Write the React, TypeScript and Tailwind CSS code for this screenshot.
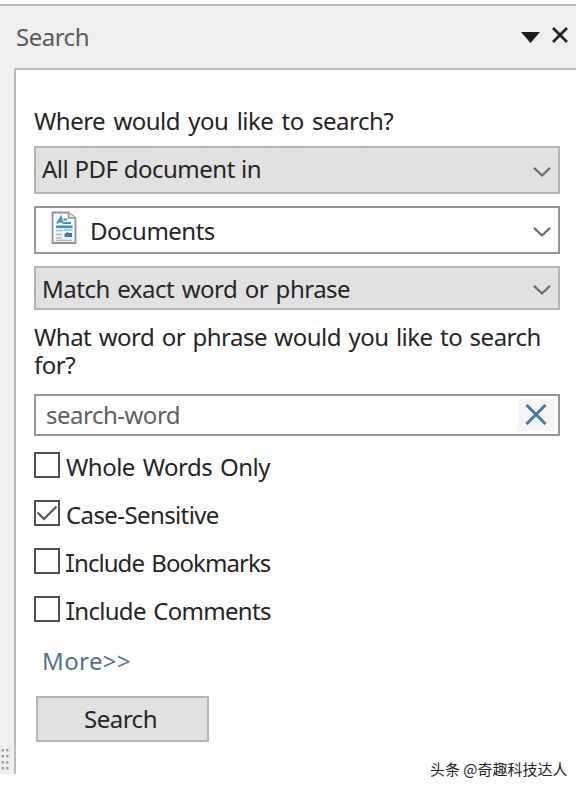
import React from "react";

function Chevron() {
  return (
    <svg width="18" height="12" viewBox="0 0 18 12" fill="none" stroke="#707070" strokeWidth="2.3" className="mt-1 mr-[7px] shrink-0">
      <path d="M1 1.8 L9 9.500 L17 1.8" />
    </svg>
  );
}

function DocumentIcon() {
  return (
    <svg width="26" height="34" viewBox="0 0 26 34" fill="none" className="-mt-1">
      <path d="M1.500 1.500H17.500L24.500 7V32H1.500Z" fill="#f4f7f8" stroke="#949494" strokeWidth="1.8" />
      <path d="M17.500 1.500V7H24.500" fill="#e3e3e3" stroke="#999" strokeWidth="1.500" />
      <path d="M6 12.500L10 6L11.500 12M7 10.500H11M12.500 8.500H16M12 12H20" stroke="#4c93b2" strokeWidth="1.8" />
      <path d="M5 15.800H21.500" stroke="#3d93bb" strokeWidth="2.600" />
      <path d="M5 19.500H12M13 19H21" stroke="#8fc1d4" strokeWidth="1.500" />
      <path d="M5 23.500H11M5 27H11M5 29.500H21" stroke="#adb5b8" strokeWidth="1.300" />
      <path d="M13.500 23L16.500 21L18 22H21V26H13.500Z" fill="#397da8" />
    </svg>
  );
}

// Capital I with crossbars, narrowed to sit with the proportional text.
function SerifI() {
  return (
    <span className="-mr-[2.5px] -ml-[3px] inline-block scale-x-80 font-['DejaVu_Sans_Mono',monospace] leading-none">I</span>
  );
}

type CheckRowProps = { children: React.ReactNode; checked?: boolean; spacing: string };

function CheckRow({ children, checked = false, spacing }: CheckRowProps) {
  return (
    <label className="flex h-12 items-start">
      <span className="h-[26px] w-[26px] shrink-0 border-2 border-[#515151] bg-white">
        {checked && (
          <svg width="22" height="22" viewBox="0 0 22 22" fill="none" stroke="#555" strokeWidth="2.1">
            <path d="M1.500 10.500L8 17L20.500 4.500" />
          </svg>
        )}
      </span>
      <span className={`ml-1.5 mt-px leading-[28px] whitespace-nowrap ${spacing}`}>{children}</span>
    </label>
  );
}

export default function App() {
  return (
    <div className="h-[790px] w-[580px] overflow-hidden bg-white pt-1 font-['Noto_Sans',sans-serif] text-[24px] tracking-[-0.5px] text-[#252525]">
      <div className="flex h-[770px] w-[576px] flex-col border-t-2 border-[#bcbcbc] bg-[#efefef]">
        <header className="flex h-[62px] shrink-0 items-center">
          <h1 className="ml-4 leading-[28px] text-[#5b5b5b]">Search</h1>
          <svg className="mr-[11px] ml-auto" width="19" height="11" viewBox="0 0 19 11" fill="#211b1d">
            <path d="M0 0H19L9.500 11Z" />
          </svg>
          <svg className="-mt-1 mr-[7px]" width="18" height="16" viewBox="0 0 18 16" stroke="#272426" strokeWidth="2.8">
            <path d="M2 1L16 15M16 1L2 15" />
          </svg>
        </header>
        <div className="flex min-h-0 flex-1">
          <aside className="flex w-[14px] shrink-0 flex-col justify-end pb-[3px] pl-[1px]">
            <svg width="8" height="22" viewBox="0 0 8 22" fill="#a2a2a2">
              <path d="M0.500 0H3V2.500H0.500ZM5 0H7.500V2.500H5ZM0.500 6H3V8.500H0.500ZM5 6H7.500V8.500H5ZM0.500 12H3V14.500H0.500ZM5 12H7.500V14.500H5ZM0.500 18H3V20.500H0.500ZM5 18H7.500V20.500H5Z" />
            </svg>
          </aside>
          <main className="flex-1 border-t-2 border-l-2 border-[#bcbcbc] bg-white pl-[18px]">
            <p className="mt-[37px] h-[39px] leading-[28px] whitespace-nowrap [word-spacing:2.5px]">Where would you like to search?</p>
            <div className="flex h-12 w-[526px] items-center border-2 border-[#b4b4b4] bg-[#e1e1e1] pl-1.5">
              <span className="-mt-0.5 flex-1 [word-spacing:0.5px]">All PDF document in</span>
              <Chevron />
            </div>
            <div className="mt-3 flex h-12 w-[526px] items-center border-2 border-[#969696] bg-white pl-[15px]">
              <DocumentIcon />
              <span className="mt-0.5 ml-[13px] flex-1">Documents</span>
              <Chevron />
            </div>
            <div className="mt-3 flex h-11 w-[526px] items-center border-2 border-[#b4b4b4] bg-[#e1e1e1] pl-1.5">
              <span className="mt-0.5 flex-1 [word-spacing:1.75px]">Match exact word or phrase</span>
              <Chevron />
            </div>
            <p className="mt-[13px] h-[71px] leading-[28px] whitespace-nowrap [word-spacing:1.65px]">
              What word or phrase would you like to search
              <br />
              for?
            </p>
            <div className="flex h-[42px] w-[526px] items-center border-2 border-[#969696] bg-white pl-2.5 text-[#606060]">
              <span className="flex-1">search-word</span>
              <span className="mr-1 flex h-8 w-[36px] items-center justify-center bg-[#f5f5f5]">
                <svg className="-mt-0.5" width="22" height="21" viewBox="0 0 22 21" stroke="#487b9f" strokeWidth="3">
                  <path d="M1.500 1L20.500 20M20.500 1L1.500 20" />
                </svg>
              </span>
            </div>
            <div className="mt-4">
              <CheckRow spacing="[word-spacing:2px]">Whole Words Only</CheckRow>
              <CheckRow checked spacing="tracking-[-0.6px]">Case-Sensitive</CheckRow>
              <CheckRow spacing="tracking-[-0.95px] [word-spacing:2px]">
                <SerifI />nclude Bookmarks
              </CheckRow>
              <CheckRow spacing="tracking-[-0.7px] [word-spacing:2px]">
                <SerifI />nclude Comments
              </CheckRow>
            </div>
            <a className="mt-[3px] ml-2 block leading-[28px] tracking-[0.4px] text-[#55718f]">More&gt;&gt;</a>
            <button className="mt-[21px] ml-0.5 block h-[46px] w-[173px] border-2 border-[#b5b5b5] bg-[#e1e1e1] pr-1">Search</button>
          </main>
        </div>
      </div>
      <footer className="-mt-4 ml-[430px] font-['Noto_Sans_CJK_SC',sans-serif] text-[15px] leading-[22px] tracking-normal whitespace-nowrap">头条 @奇趣科技达人</footer>
    </div>
  );
}
